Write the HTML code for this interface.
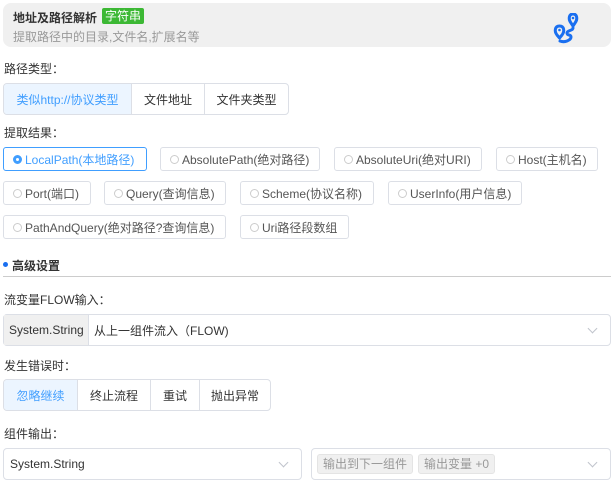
<!DOCTYPE html><html><head><meta charset="utf-8"><style>
*{box-sizing:border-box;margin:0;padding:0}
body{width:614px;height:483px;background:#fff;font-family:"Liberation Sans","Noto Sans CJK SC",sans-serif;font-size:12px;color:#333;position:relative;overflow:hidden}
.a{position:absolute}
.hd{left:3px;top:3px;width:608px;height:44px;background:#f0f0f0;border-radius:8px}
.lbl{left:4px;font-size:12px;color:#333}
.seg{display:flex;border:1px solid #dcdfe6;border-radius:4px;overflow:hidden}
.seg div{display:flex;align-items:center;justify-content:center;border-left:1px solid #dcdfe6;height:100%}
.seg div:first-child{border-left:none;background:#ecf5ff;color:#409eff}
.r{height:24px;border:1px solid #dcdfe6;border-radius:3px;display:flex;align-items:center;padding-left:9px;color:#555}
.r i{width:9px;height:9px;border:1px solid #ccc;border-radius:50%;margin-right:3px;display:inline-block}
.r.on{border-color:#409eff;color:#409eff}
.r.on i{border:3px solid #409eff;width:9px;height:9px}
.box{border:1px solid #dcdfe6;border-radius:4px;height:32px;display:flex;align-items:center}
.chev{position:absolute;right:14px;top:10px;width:7px;height:7px;border-right:1px solid #c0c4cc;border-bottom:1px solid #c0c4cc;transform:rotate(45deg)}
.tag{background:#f0f0f0;border:1px solid #e4e4e4;border-radius:3px;color:#999;padding:0 5px;height:20px;line-height:18px;margin-left:5px}
</style></head><body>
<div class="a hd"></div>
<div class="a" style="left:13px;top:9px;font-weight:bold;font-size:12px;color:#333">地址及路径解析</div>
<div class="a" style="left:102px;top:8px;height:16px;padding:0 3px;background:#3cb834;color:#fff;border-radius:2px;font-size:12px;line-height:16px">字符串</div>
<div class="a" style="left:13px;top:28px;color:#999">提取路径中的目录,文件名,扩展名等</div>
<svg class="a" style="left:551px;top:13px" width="32" height="34" viewBox="0 0 32 34"><g fill="none" stroke="#1a6ff0" stroke-width="3" stroke-linecap="round" stroke-linejoin="round"><path d="M20 10c-3-4-2-9 2-9s5 5 2 9l-2 3z"/><path d="M6 22c-3-4-2-9 2.5-9s5.5 5 2.5 9l-2.5 3z"/><path d="M22 15c0 3-6 2-6 5s4 1 4 4-6 6-11 4"/></g><circle cx="22" cy="5" r="1.3" fill="#1a6ff0"/><circle cx="8.5" cy="17" r="1.3" fill="#1a6ff0"/></svg>
<div class="a lbl" style="top:60px">路径类型：</div>
<div class="a seg" style="left:3px;top:83px;width:286px;height:32px"><div style="width:127px">类似http://协议类型</div><div style="width:73px">文件地址</div><div style="flex:1">文件夹类型</div></div>
<div class="a lbl" style="top:124px">提取结果：</div>
<div class="a r on" style="left:3px;top:147px;width:144px"><i></i>LocalPath(本地路径)</div>
<div class="a r" style="left:160px;top:147px;width:160px"><i></i>AbsolutePath(绝对路径)</div>
<div class="a r" style="left:334px;top:147px;width:148px"><i></i>AbsoluteUri(绝对URI)</div>
<div class="a r" style="left:496px;top:147px;width:102px"><i></i>Host(主机名)</div>
<div class="a r" style="left:3px;top:181px;width:88px"><i></i>Port(端口)</div>
<div class="a r" style="left:104px;top:181px;width:122px"><i></i>Query(查询信息)</div>
<div class="a r" style="left:240px;top:181px;width:134px"><i></i>Scheme(协议名称)</div>
<div class="a r" style="left:388px;top:181px;width:134px"><i></i>UserInfo(用户信息)</div>
<div class="a r" style="left:3px;top:215px;width:223px"><i></i>PathAndQuery(绝对路径?查询信息)</div>
<div class="a r" style="left:240px;top:215px;width:109px"><i></i>Uri路径段数组</div>
<div class="a" style="left:3px;top:262px;width:5px;height:5px;border-radius:50%;background:#1a6ff0"></div>
<div class="a" style="left:12px;top:257px;font-weight:bold;color:#333">高级设置</div>
<div class="a" style="left:3px;top:276px;width:608px;height:1px;background:#ccc"></div>
<div class="a lbl" style="top:291px">流变量FLOW输入：</div>
<div class="a box" style="left:3px;top:314px;width:608px"><div style="width:85px;height:100%;background:#f0f0f0;border-right:1px solid #dcdfe6;display:flex;align-items:center;padding-left:5px;color:#333">System.String</div><div style="padding-left:5px">从上一组件流入（FLOW)</div><span class="chev"></span></div>
<div class="a lbl" style="top:357px">发生错误时：</div>
<div class="a seg" style="left:3px;top:379px;width:268px;height:32px"><div style="width:73px">忽略继续</div><div style="width:73px">终止流程</div><div style="width:49px">重试</div><div style="flex:1">抛出异常</div></div>
<div class="a lbl" style="top:425px">组件输出：</div>
<div class="a box" style="left:3px;top:448px;width:299px;padding-left:6px">System.String<span class="chev"></span></div>
<div class="a box" style="left:311px;top:448px;width:300px"><span class="tag">输出到下一组件</span><span class="tag">输出变量 +0</span><span class="chev"></span></div>
</body></html>
